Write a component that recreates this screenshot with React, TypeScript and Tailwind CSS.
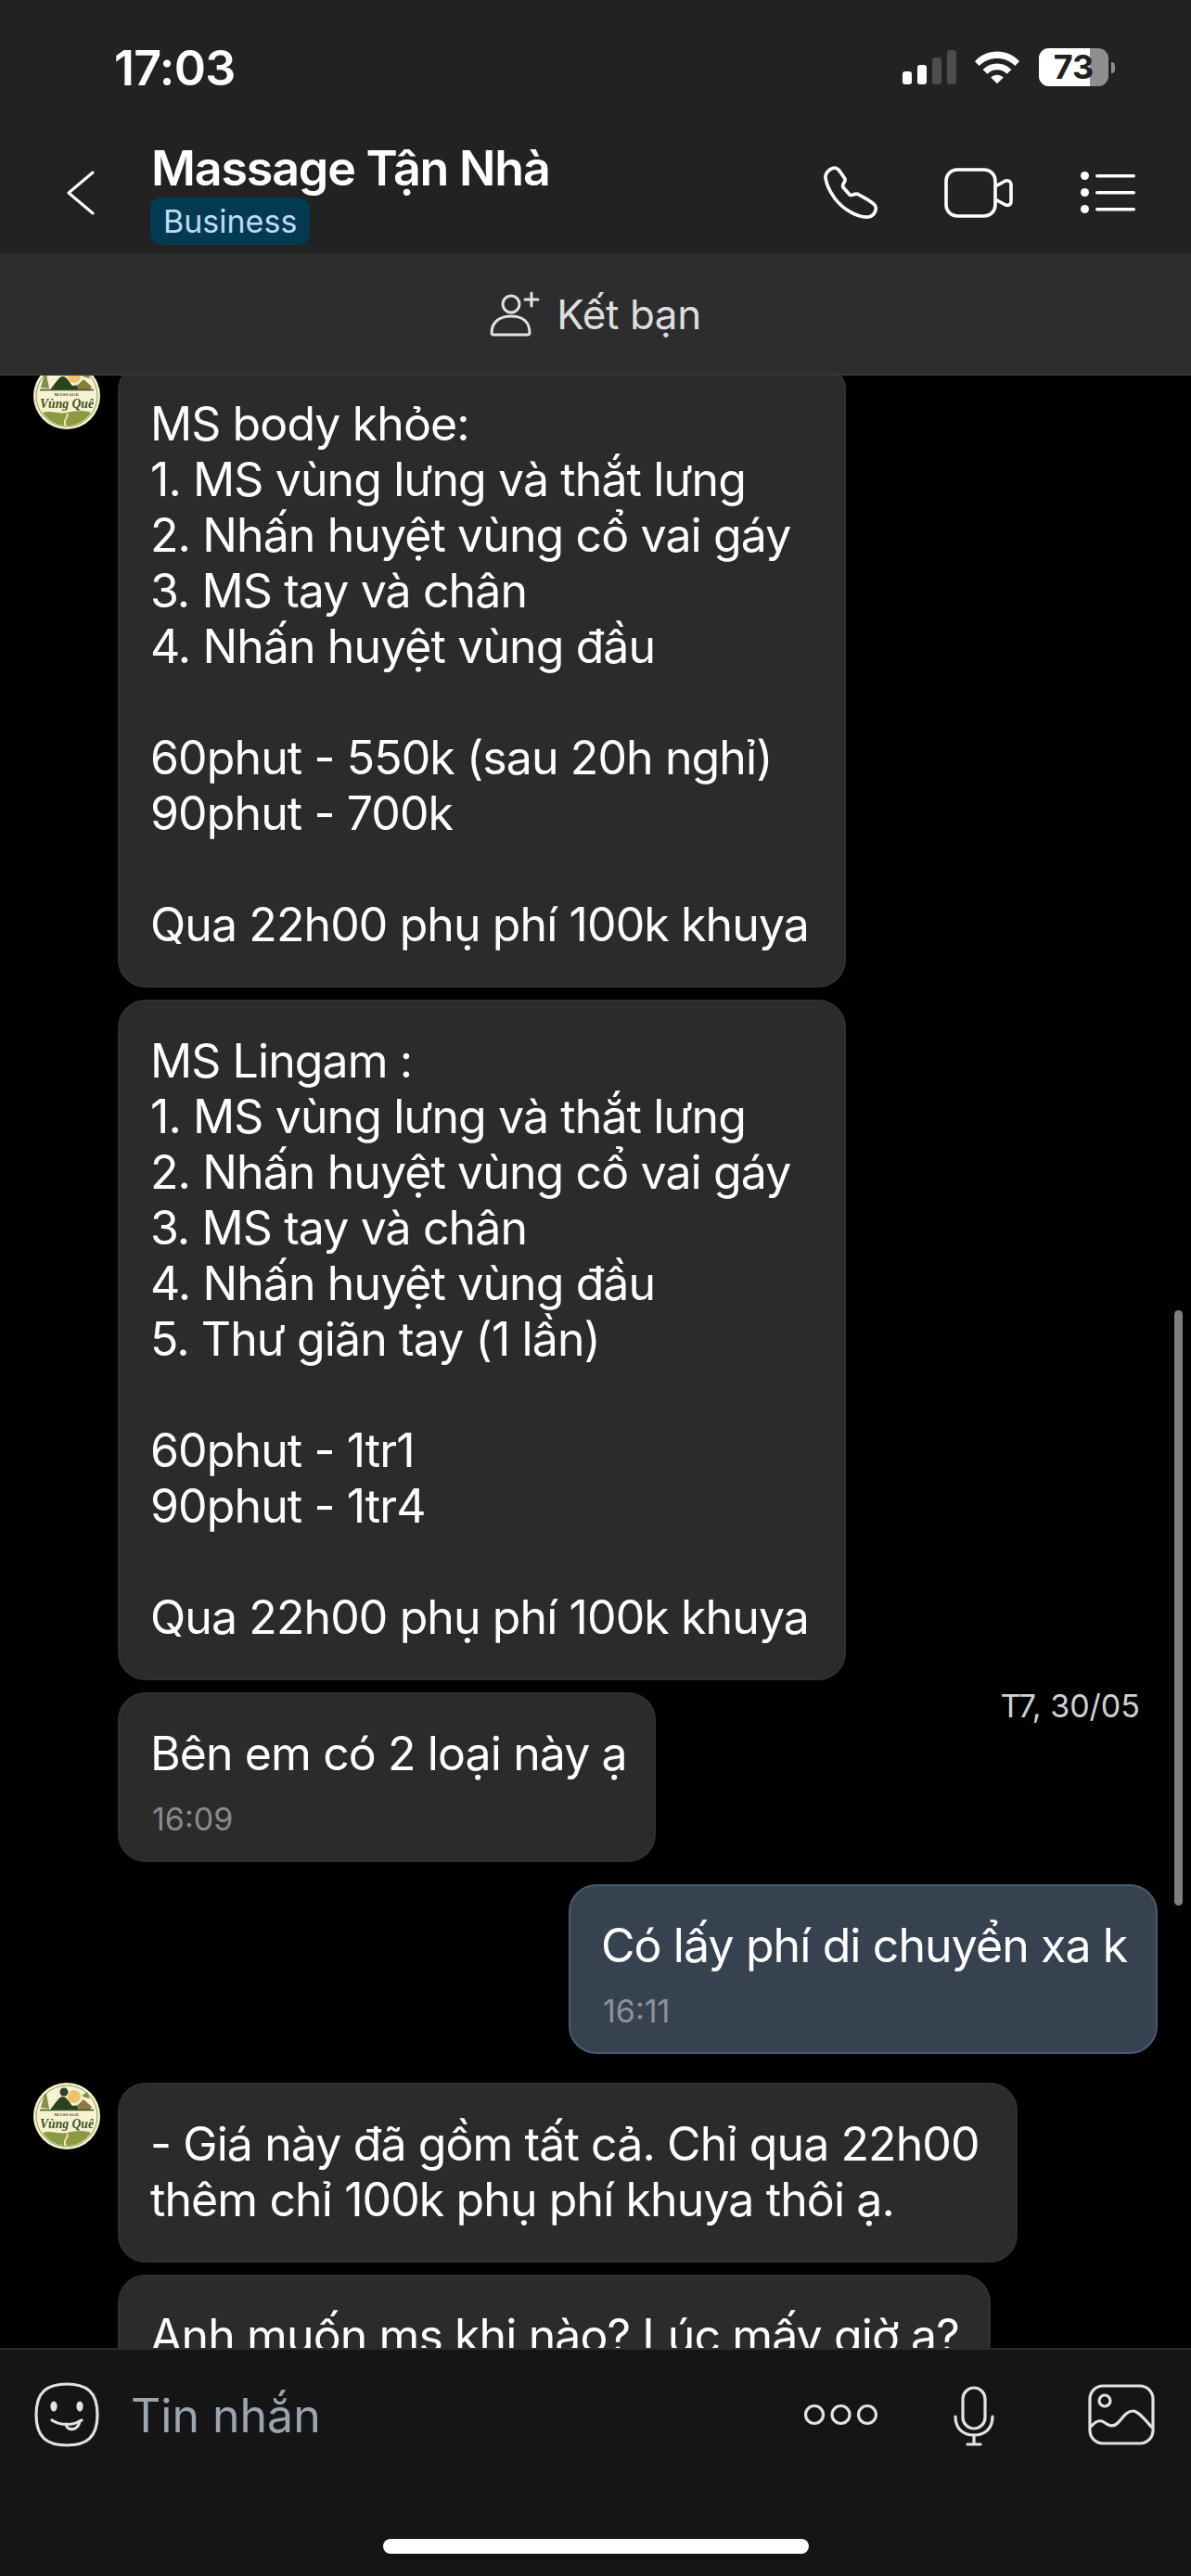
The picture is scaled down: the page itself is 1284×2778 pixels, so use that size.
const menuBody = `MS body khỏe:
1. MS vùng lưng và thắt lưng
2. Nhấn huyệt vùng cổ vai gáy
3. MS tay và chân
4. Nhấn huyệt vùng đầu

60phut - 550k (sau 20h nghỉ)
90phut - 700k

Qua 22h00 phụ phí 100k khuya`;

const menuLingam = `MS Lingam :
1. MS vùng lưng và thắt lưng
2. Nhấn huyệt vùng cổ vai gáy
3. MS tay và chân
4. Nhấn huyệt vùng đầu
5. Thư giãn tay (1 lần)

60phut - 1tr1
90phut - 1tr4

Qua 22h00 phụ phí 100k khuya`;

function Avatar() {
  return (
    <svg viewBox="0 0 72 72" className="w-[72px] h-[72px] shrink-0">
      <circle cx="36" cy="36" r="36" fill="#f7f2d2" />
      <circle cx="36" cy="36" r="33" fill="none" stroke="#8d9a52" strokeWidth="1" />
      <circle cx="44" cy="15" r="7" fill="#ecc56c" />
      <path d="M8 27 L12 12 L14 12 L17 28 Z" fill="#7f9248" />
      <path d="M52 14 L58 10 L61 17 L56 16 Z" fill="#7f9248" />
      <circle cx="33" cy="10" r="4.5" fill="#2c4322" />
      <path d="M19 28 C24 22 27 16 31 15 C36 15 38 20 42 25 L52 24 L53 29 L19 29 Z" fill="#2c4322" />
      <path d="M47 25 L54 18 L63 26 L61 29 L48 29 Z" fill="#8b7a3e" />
      <path d="M7 29.5 H65" stroke="#3d5424" strokeWidth="1.4" />
      <text x="36" y="35.5" textAnchor="middle" fontSize="5" letterSpacing="0.3" fontFamily="Liberation Serif, serif" fontWeight="700" fill="#33431f">MASSAGE</text>
      <text x="36" y="49" textAnchor="middle" fontSize="15" fontStyle="italic" fontFamily="Liberation Serif, serif" fontWeight="700" fill="#3c5224" textLength="58" lengthAdjust="spacingAndGlyphs">Vùng Quê</text>
      <path d="M10 54 C18 51 28 56 36 54 C44 52 54 51 62 54 C57 62 47 68 36 68 C25 68 15 62 10 54 Z" fill="#8a9a45" />
      <path d="M36 55 C40 58 30 62 35 68" stroke="#f0e6a8" strokeWidth="2" fill="none" />
    </svg>
  );
}

function Bubble({ text, time, mine, className }: { text: string; time?: string; mine?: boolean; className?: string }) {
  return (
    <div
      className={`rounded-[30px] border-2 pl-[33px] pr-[20px] pt-[34px] ${time ? "pb-[24px]" : "pb-[36px]"} ${
        mine ? "bg-[#374250] border-[#495a72]" : "bg-[#2b2b2b] border-[#303030]"
      } ${className ?? ""}`}
    >
      <p className="whitespace-pre-wrap text-[50px] leading-[60px] tracking-[-0.9px] text-white">{text}</p>
      {time && (
        <p className={`mt-[21px] pl-[2px] text-[34px] leading-[40px] ${mine ? "text-[#8d939b]" : "text-[#8a8a8a]"}`}>{time}</p>
      )}
    </div>
  );
}

export default function App() {
  return (
    <div className="relative w-[1284px] h-[2778px] flex flex-col overflow-hidden bg-black font-['Inter','Noto_Sans',sans-serif]">
      {/* status bar + nav */}
      <div className="h-[273px] shrink-0 bg-[#222222] text-white">
        <div className="h-[140px] flex items-start justify-between pl-[123px] pr-[82px] pt-[44px]">
          <span className="text-[52px] leading-[60px] font-semibold tracking-[-0.7px]">17:03</span>
          <div className="flex items-start pt-[8px]">
            <svg width="58" height="38" viewBox="0 0 58 38" className="mt-[1px]">
              <rect x="0" y="24" width="10" height="14" rx="3" fill="#fff" />
              <rect x="16" y="17" width="10" height="21" rx="3" fill="#fff" />
              <rect x="32" y="9" width="10" height="29" rx="3" fill="#4d4d4d" />
              <rect x="48" y="1" width="10" height="37" rx="3" fill="#4d4d4d" />
            </svg>
            <svg width="50" height="38" viewBox="0 0 52 38" className="ml-[19px] mt-[1px]">
              <path d="M1 13 C14 -2 38 -2 51 13 L46 18 C35 7 17 7 6 18 Z" fill="#fff" />
              <path d="M10 22 C19 13 33 13 42 22 L37 27 C31 21 21 21 15 27 Z" fill="#fff" />
              <path d="M19 31 C23 27 29 27 33 31 L26 38 Z" fill="#fff" />
            </svg>
            <div className="relative w-[82px] h-[41px] ml-[20px]">
              <div className="absolute inset-y-0 left-0 w-[75px] rounded-[11px] overflow-hidden bg-[#8e8e8e]">
                <div className="h-full w-[55px] bg-white" />
              </div>
              <div className="absolute left-[78px] top-[15px] w-[4px] h-[12px] rounded-r-full bg-[#8e8e8e]" />
              <span className="absolute left-0 w-[75px] top-0 text-center text-[36px] leading-[41px] font-bold text-[#222222]">73</span>
            </div>
          </div>
        </div>
        <div className="flex items-start">
          <div className="w-[162px] shrink-0 pl-[72px] pt-[44px]">
            <svg width="30" height="48" viewBox="0 0 30 48" fill="none" stroke="#fff" strokeWidth="3" strokeLinecap="round" strokeLinejoin="round">
              <path d="M28 2 L2 24 L28 46" />
            </svg>
          </div>
          <div className="flex-1 pt-[12px]">
            <div className="pl-[1px] text-[52px] leading-[60px] font-semibold tracking-[-1.2px]">Massage Tận Nhà</div>
            <span className="block w-fit mt-[1px] rounded-[12px] bg-[#023a52] px-[14px] text-[34px] leading-[51px] text-[#bcdcf5]">Business</span>
          </div>
          <div className="flex items-start pr-[59px] pt-[39px]">
            <svg width="60" height="58" viewBox="0 0 60 58" fill="none" stroke="#fff" strokeWidth="3.6" strokeLinejoin="round">
              <path d="M3 13 C2 7 9 2 13 2 C17 2 19 7 24 14 C25 17 20 20 22 23 L29 31 C32 33 35 28 39 31 C44 34 51 37 56 42 C59 46 56 54 49 55 C38 56 22 47 13 35 C8 28 4 20 3 13 Z" />
            </svg>
            <svg width="74" height="54" viewBox="0 0 74 54" fill="none" stroke="#fff" strokeWidth="3.6" strokeLinejoin="round" className="ml-[71px] mt-[2px]">
              <rect x="2" y="2" width="53" height="50" rx="12" />
              <path d="M55 20 L66 14 C69 13 72 15 72 18 L72 36 C72 40 69 41 66 40 L55 34" />
            </svg>
            <svg width="60" height="46" viewBox="0 0 60 46" fill="#fff" className="ml-[73px] mt-[6px]">
              <circle cx="4.5" cy="4.5" r="4.5" />
              <circle cx="4.5" cy="22.5" r="4.5" />
              <circle cx="4.5" cy="40.5" r="4.5" />
              <rect x="16" y="3" width="43" height="3.6" rx="1.8" />
              <rect x="16" y="21" width="43" height="3.6" rx="1.8" />
              <rect x="16" y="39" width="43" height="3.6" rx="1.8" />
            </svg>
          </div>
        </div>
      </div>

      {/* add friend */}
      <div className="h-[132px] shrink-0 flex items-center justify-center gap-[18px] bg-[#2d2d2d] border-b-2 border-[#363636]">
        <svg width="54" height="50" viewBox="0 0 54 50" fill="none" stroke="#e2e2e2" strokeWidth="3" strokeLinejoin="round" strokeLinecap="round">
          <circle cx="23" cy="15" r="9" />
          <path d="M2 46 C2 34 11 28 23 28 C35 28 43 34 43 46 C43 47 42 48 41 48 L4 48 C3 48 2 47 2 46 Z" />
          <path d="M38 10 H52 M45 3 V17" />
        </svg>
        <span className="text-[44px] leading-[52px] tracking-[-0.4px] text-[#dedede] pt-[2px]">Kết bạn</span>
      </div>

      {/* messages */}
      <div className="relative flex-1 overflow-hidden">
        <div className="-mt-[14px] flex flex-col pl-[36px] pr-[36px]">
          <div className="flex items-start gap-[19px]">
            <Avatar />
            <Bubble text={menuBody} className="w-[785px]" />
          </div>
          <div className="ml-[91px] mt-[13px]">
            <Bubble text={menuLingam} className="w-[785px]" />
          </div>
          <div className="ml-[91px] mt-[13px] flex items-start justify-between">
            <Bubble text="Bên em có 2 loại này ạ" time="16:09" className="w-[580px]" />
            <span className="mr-[19px] -mt-[5px] text-[34px] leading-[40px] text-[#d0d0d0]">T7, 30/05</span>
          </div>
          <div className="mt-[24px] flex justify-end">
            <Bubble mine text="Có lấy phí di chuyển xa k" time="16:11" className="w-[635px]" />
          </div>
          <div className="mt-[31px] flex items-start gap-[19px]">
            <Avatar />
            <Bubble text={"- Giá này đã gồm tất cả. Chỉ qua 22h00\nthêm chỉ 100k phụ phí khuya thôi ạ."} className="w-[970px]" />
          </div>
          <div className="ml-[91px] mt-[13px] self-start">
            <Bubble text="Anh muốn ms khi nào? Lúc mấy giờ ạ?" className="w-[941px]" />
          </div>
        </div>
        {/* scroll indicator */}
        <div className="absolute right-[9px] top-[1008px] w-[9px] h-[642px] rounded-full bg-[#7e7e7e]" />
      </div>

      {/* input bar */}
      <div className="h-[246px] shrink-0 bg-[#151515] border-t-2 border-[#2c2c2c]">
        <div className="flex items-start pl-[37px] pr-[39px] pt-[35px]">
          <svg width="70" height="70" viewBox="0 0 70 70" fill="none" stroke="#e2e2e2" strokeWidth="3.2" strokeLinecap="round">
            <path d="M35 2 C56 2 68 10 68 35 C68 60 56 68 35 68 C14 68 2 60 2 35 C2 10 14 2 35 2 Z" />
            <ellipse cx="21" cy="26" rx="3.6" ry="5.5" fill="#e2e2e2" stroke="none" />
            <ellipse cx="49" cy="26" rx="3.6" ry="5.5" fill="#e2e2e2" stroke="none" />
            <path d="M19 41 C28 47 42 47 51 41" />
            <path d="M34 45 C35 53 47 53 49 42" />
          </svg>
          <span className="ml-[34px] text-[50px] leading-[72px] text-[#9aa5af]">Tin nhắn</span>
          <div className="ml-auto flex items-start">
            <svg width="80" height="24" viewBox="0 0 80 24" fill="none" stroke="#e2e2e2" strokeWidth="3.2" className="mt-[23px]">
              <circle cx="12" cy="12" r="9.5" />
              <circle cx="40.5" cy="12" r="9.5" />
              <circle cx="69" cy="12" r="9.5" />
            </svg>
            <svg width="44" height="66" viewBox="0 0 44 66" fill="none" stroke="#e2e2e2" strokeWidth="3.2" strokeLinecap="round" className="ml-[82px] mt-[4px]">
              <rect x="10" y="2" width="24" height="44" rx="12" />
              <path d="M2 33 C2 46 10 53 22 53 C34 53 42 46 42 33" />
              <path d="M22 53 V63 M15 63 H29" />
            </svg>
            <svg width="72" height="66" viewBox="0 0 72 66" fill="none" stroke="#e2e2e2" strokeWidth="3.2" className="ml-[101px] mt-[2px]">
              <rect x="2" y="2" width="68" height="62" rx="14" />
              <circle cx="18" cy="18" r="6" />
              <path d="M3 46 C8 40 12 38 17 41 C22 45 27 47 32 42 C37 37 41 29 49 29 C55 30 62 39 69 47" />
            </svg>
          </div>
        </div>
      </div>

      {/* home indicator */}
      <div className="absolute left-[413px] bottom-[24px] w-[459px] h-[16px] rounded-full bg-white" />
    </div>
  );
}
